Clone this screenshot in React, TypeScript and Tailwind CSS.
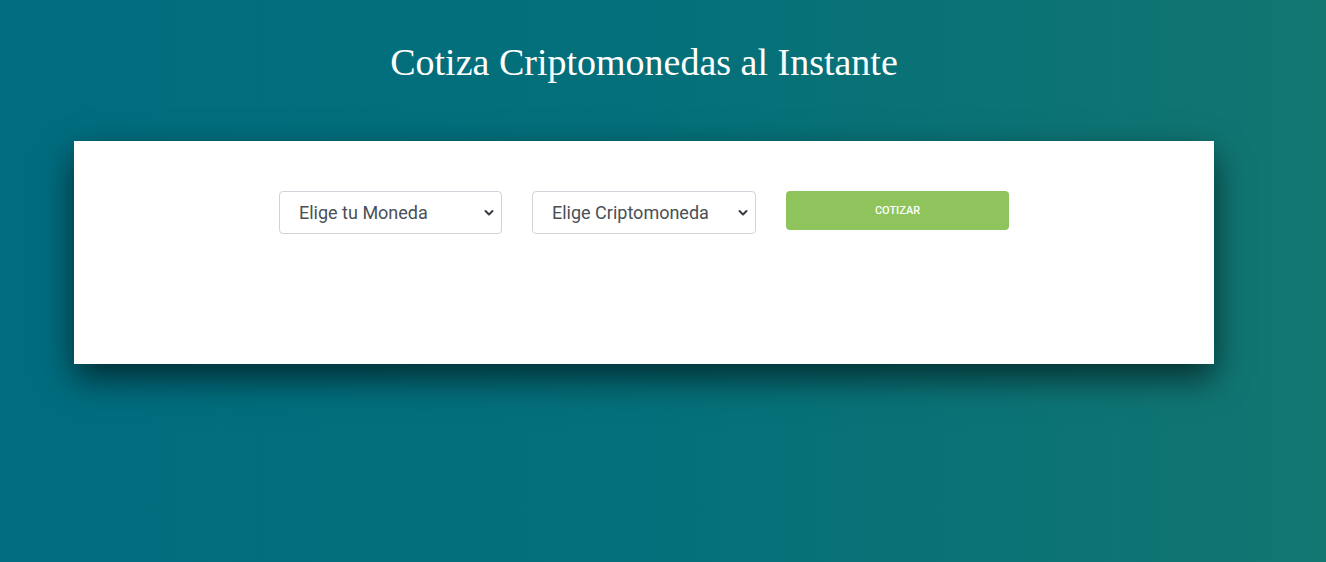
import React from 'react';

const Chevron = () => (
    <svg className="pointer-events-none absolute right-[8px] top-1/2 -translate-y-1/2" width="10" height="8" viewBox="0 0 10 8" fill="none">
        <path d="M1.5 2l3.5 3.5L8.5 2" stroke="#343a40" strokeWidth="2" strokeLinecap="round" strokeLinejoin="round" />
    </svg>
);

const Selector: React.FC<{ label: string; width: string }> = ({ label, width }) => (
    <div className={`relative ${width}`}>
        <select className="h-[43px] w-full appearance-none rounded-[4px] border border-[#ced4da] bg-white pl-[19px] pr-8 text-[18px] text-[#495057] font-['Roboto',sans-serif] outline-none">
            <option>{label}</option>
        </select>
        <Chevron />
    </div>
);

const App: React.FC = () => {
    return (
        <main className="min-h-[562px] w-full bg-gradient-to-r from-[#016c7f] via-[#04707a] to-[#127671] pb-[198px]">
            <div className="w-[1140px] ml-[74px]">
                <h1 className="pt-[40px] text-center text-[38px] leading-[44px] text-white font-['Liberation_Serif',serif]">
                    Cotiza Criptomonedas al Instante
                </h1>
                <section className="mt-[57px] h-[223px] bg-white shadow-[0_14px_32px_rgba(0,0,0,0.6)]">
                    <form className="flex justify-center gap-[30px] pt-[50px]" onSubmit={e => e.preventDefault()}>
                        <Selector label="Elige tu Moneda" width="w-[223px]" />
                        <Selector label="Elige Criptomoneda" width="w-[224px]" />
                        <button type="submit" className="h-[39px] w-[223px] rounded-[4px] bg-[#8ec45b] pt-[2px] text-[11px] font-medium text-white uppercase font-['Roboto',sans-serif]">
                            Cotizar
                        </button>
                    </form>
                </section>
            </div>
        </main>
    );
};

export default App;
